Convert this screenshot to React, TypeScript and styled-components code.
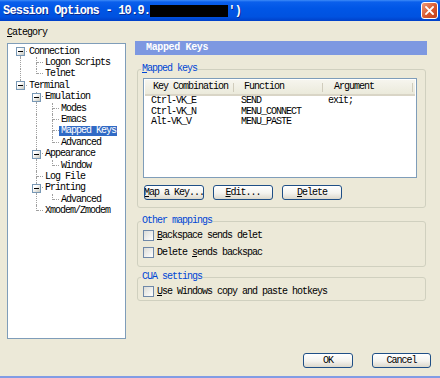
import React from 'react';
import styled, { createGlobalStyle } from 'styled-components';

const mono = `"Liberation Mono", "DejaVu Sans Mono", monospace`;

const GlobalStyle = createGlobalStyle`
  html, body {
    margin: 0;
    padding: 0;
    background: #ece9d8;
  }
  body {
    width: 440px;
    height: 378px;
    overflow: hidden;
  }
`;

type TreeNode = {
  label: string;
  level: number;
  guides: boolean[];
  first?: boolean;
  last: boolean;
  expander?: boolean;
  selected?: boolean;
};

const tree: TreeNode[] = [
  { label: 'Connection', level: 0, guides: [], first: true, last: false, expander: true },
  { label: 'Logon Scripts', level: 1, guides: [true], last: false },
  { label: 'Telnet', level: 1, guides: [true], last: true },
  { label: 'Terminal', level: 0, guides: [], last: true, expander: true },
  { label: 'Emulation', level: 1, guides: [false], last: false, expander: true },
  { label: 'Modes', level: 2, guides: [false, true], last: false },
  { label: 'Emacs', level: 2, guides: [false, true], last: false },
  { label: 'Mapped Keys', level: 2, guides: [false, true], last: false, selected: true },
  { label: 'Advanced', level: 2, guides: [false, true], last: true },
  { label: 'Appearance', level: 1, guides: [false], last: false, expander: true },
  { label: 'Window', level: 2, guides: [false, true], last: true },
  { label: 'Log File', level: 1, guides: [false], last: false },
  { label: 'Printing', level: 1, guides: [false], last: false, expander: true },
  { label: 'Advanced', level: 2, guides: [false, true], last: true },
  { label: 'Xmodem/Zmodem', level: 1, guides: [false], last: true },
];

const mappings = [
  { key: 'Ctrl-VK_E', fn: 'SEND', arg: 'exit;' },
  { key: 'Ctrl-VK_N', fn: 'MENU_CONNECT', arg: '' },
  { key: 'Alt-VK_V', fn: 'MENU_PASTE', arg: '' },
];

const Window = styled.div`
  width: 440px;
  height: 378px;
  box-sizing: border-box;
  background: #ece9d8;
  border-bottom: 2px solid #819ce4;
  display: flex;
  flex-direction: column;
  font-family: ${mono};
  font-size: 10px;
  letter-spacing: -1px;
  color: #000;
`;

const TitleBar = styled.div`
  height: 21px;
  flex: none;
  display: flex;
  align-items: center;
  padding-left: 3px;
  background: linear-gradient(
    #3d8bf7 0,
    #0a5fec 2px,
    #0056e6 40%,
    #0052e0 80%,
    #0040c8 100%
  );
`;

const Title = styled.div`
  flex: 1;
  display: flex;
  align-items: center;
  color: #fff;
  font-weight: bold;
  font-size: 12px;
  letter-spacing: -0.8px;
  white-space: pre;
  text-shadow: 1px 1px #0b2a8f;
`;

const Redacted = styled.span`
  display: inline-block;
  width: 78px;
  height: 12px;
  background: #000;
`;

const CloseButton = styled.div`
  width: 17px;
  height: 17px;
  margin-right: 2px;
  box-sizing: border-box;
  border: 1px solid #fff;
  border-radius: 3px;
  background: linear-gradient(135deg, #ef9a7a, #d8582f 55%, #c0401c);
  display: flex;
  align-items: center;
  justify-content: center;
`;

const Main = styled.div`
  display: flex;
  gap: 9px;
  padding-left: 7px;
`;

const LeftCol = styled.div`
  width: 119px;
  padding-top: 7px;
  display: flex;
  flex-direction: column;
`;

const CategoryLabel = styled.div`
  line-height: 10px;
  height: 10px;
  margin-bottom: 5px;
`;

const U = styled.span`
  text-decoration: underline;
`;

const TreeBox = styled.div`
  height: 296px;
  box-sizing: border-box;
  background: #fff;
  border: 1px solid #7f9db9;
  padding: 2px 0 0 5px;
`;

const TreeRow = styled.div`
  display: flex;
  height: 11.4px;
`;

const Guide = styled.span<{ $on: boolean }>`
  flex: none;
  width: 16px;
  height: 100%;

  &::before {
    content: '';
    display: ${({ $on }) => ($on ? 'block' : 'none')};
    margin-left: 7px;
    width: 0;
    height: 100%;
    border-left: 1px dotted #a0a0a0;
  }
`;

const Connector = styled.span`
  position: relative;
  flex: none;
  width: 14px;
  height: 100%;
  display: grid;
  grid-template-columns: 8px 6px;
  grid-template-rows: 1fr 1fr;
`;

const Quarter = styled.span<{ $right?: boolean; $bottom?: boolean }>`
  box-sizing: border-box;
  border-right: ${({ $right }) => ($right ? '1px dotted #a0a0a0' : 'none')};
  border-bottom: ${({ $bottom }) => ($bottom ? '1px dotted #a0a0a0' : 'none')};
`;

const Expander = styled.span`
  position: absolute;
  left: 3px;
  top: calc(50% - 4.5px);
  width: 9px;
  height: 9px;
  box-sizing: border-box;
  border: 1px solid #7898b5;
  background: linear-gradient(135deg, #ffffff 30%, #c6c6bd);

  &::after {
    content: '';
    display: block;
    width: 5px;
    height: 1px;
    margin: 3px auto 0;
    background: #000;
  }
`;

const TreeLabel = styled.span<{ $selected?: boolean }>`
  align-self: center;
  padding: 0 1px 0 2px;
  line-height: 10px;
  white-space: nowrap;
  background: ${({ $selected }) => ($selected ? '#316ac5' : 'transparent')};
  color: ${({ $selected }) => ($selected ? '#fff' : '#000')};
`;

const RightCol = styled.div`
  width: 292px;
  padding-top: 20px;
  display: flex;
  flex-direction: column;
`;

const PageHeader = styled.div`
  height: 14px;
  background: #7d98e1;
  color: #fff;
  font-weight: bold;
  letter-spacing: -0.35px;
  line-height: 14px;
  padding-left: 11px;
`;

const Group = styled.fieldset<{ $top: number; $bottom: number }>`
  margin: ${({ $top }) => $top}px 1px 0 2px;
  padding: 0 8px ${({ $bottom }) => $bottom}px 5px;
  border: 1px solid #d0d0bf;
  border-radius: 3px;
  min-width: 0;
`;

const Legend = styled.legend`
  padding: 0 1px;
  margin-left: -2px;
  color: #0046d5;
  line-height: 10px;
  font-size: 10px;
`;

const ListView = styled.div`
  margin-top: 4px;
  height: 100px;
  box-sizing: border-box;
  border: 1px solid #7f9db9;
  background: #fff;
  padding: 1px;
`;

const ListHeader = styled.div`
  display: grid;
  grid-template-columns: 91px 89px 1fr;
  height: 16px;
  box-sizing: border-box;
  background: linear-gradient(#f6f5ee, #ebeadb);
  border-bottom: 2px solid #d9d5c6;
`;

const HeaderCell = styled.div<{ $pad: number }>`
  padding-left: ${({ $pad }) => $pad}px;
  line-height: 14px;
  background: linear-gradient(#d0ccbc, #d0ccbc) no-repeat right 2px top 3px / 1px 9px;
`;

const ListRow = styled.div`
  display: grid;
  grid-template-columns: 91px 89px 1fr;
  height: 10.5px;
  line-height: 10.5px;
`;

const Cell = styled.div<{ $pad: number }>`
  padding-left: ${({ $pad }) => $pad}px;
  white-space: nowrap;
`;

const ButtonRow = styled.div`
  display: flex;
  gap: 9px;
  margin: 7px 0 0 1px;
`;

const Button = styled.button<{ $w: number }>`
  width: ${({ $w }) => $w}px;
  height: 15px;
  padding: 0;
  box-sizing: border-box;
  border: 1px solid #1f4f86;
  border-radius: 3px;
  background: linear-gradient(#ffffff, #f4f3ee 55%, #dcd8cc);
  font-family: ${mono};
  font-size: 10px;
  letter-spacing: -1px;
  color: #000;
  display: flex;
  align-items: center;
  justify-content: center;
  overflow: hidden;
  white-space: nowrap;
`;

const CheckRow = styled.div<{ $gap: number }>`
  display: flex;
  align-items: center;
  gap: 3px;
  height: 12px;
  margin-top: ${({ $gap }) => $gap}px;
  white-space: nowrap;
`;

const CheckBox = styled.span`
  width: 11px;
  height: 11px;
  box-sizing: border-box;
  border: 1px solid #6f88a8;
  background: linear-gradient(135deg, #dcdcd7, #ffffff);
`;

const Footer = styled.div`
  display: flex;
  justify-content: flex-end;
  gap: 19px;
  padding-right: 9px;
  margin-top: 14px;
`;

const TreeItem: React.FC<{ node: TreeNode }> = ({ node }) => (
  <TreeRow>
    {node.guides.map((on, i) => (
      <Guide key={i} $on={on} />
    ))}
    <Connector>
      <Quarter $right={!node.first} />
      <Quarter $bottom />
      <Quarter $right={!node.last} />
      <Quarter />
      {node.expander && <Expander />}
    </Connector>
    <TreeLabel $selected={node.selected}>{node.label}</TreeLabel>
  </TreeRow>
);

const App: React.FC = () => {
  return (
    <>
      <GlobalStyle />
      <Window>
        <TitleBar>
          <Title>
            Session Options - 10.9.<Redacted />')
          </Title>
          <CloseButton>
            <svg width="9" height="9" viewBox="0 0 9 9">
              <path d="M1 1L8 8M8 1L1 8" stroke="#fff" strokeWidth="1.8" strokeLinecap="square" />
            </svg>
          </CloseButton>
        </TitleBar>

        <Main>
          <LeftCol>
            <CategoryLabel>
              <U>C</U>ategory
            </CategoryLabel>
            <TreeBox>
              {tree.map((node, i) => (
                <TreeItem key={i} node={node} />
              ))}
            </TreeBox>
          </LeftCol>

          <RightCol>
            <PageHeader>Mapped Keys</PageHeader>

            <Group $top={9} $bottom={7}>
              <Legend>
                <U>M</U>apped keys
              </Legend>
              <ListView>
                <ListHeader>
                  <HeaderCell $pad={8}>Key Combination</HeaderCell>
                  <HeaderCell $pad={8}>Function</HeaderCell>
                  <HeaderCell $pad={9}>Argument</HeaderCell>
                </ListHeader>
                {mappings.map((m) => (
                  <ListRow key={m.key}>
                    <Cell $pad={6}>{m.key}</Cell>
                    <Cell $pad={5}>{m.fn}</Cell>
                    <Cell $pad={3}>{m.arg}</Cell>
                  </ListRow>
                ))}
              </ListView>
              <ButtonRow>
                <Button $w={60}>
                  <U>M</U>ap a Key...
                </Button>
                <Button $w={60}>
                  <U>E</U>dit...
                </Button>
                <Button $w={60}>
                  <U>D</U>elete
                </Button>
              </ButtonRow>
            </Group>

            <Group $top={8} $bottom={8}>
              <Legend>Other mappings</Legend>
              <CheckRow $gap={3}>
                <CheckBox />
                <span>
                  <U>B</U>ackspace sends delet
                </span>
              </CheckRow>
              <CheckRow $gap={5}>
                <CheckBox />
                <span>
                  Delete <U>s</U>ends backspac
                </span>
              </CheckRow>
            </Group>

            <Group $top={5} $bottom={3}>
              <Legend>CUA settings</Legend>
              <CheckRow $gap={3}>
                <CheckBox />
                <span>
                  <U>U</U>se Windows copy and paste hotkeys
                </span>
              </CheckRow>
            </Group>
          </RightCol>
        </Main>

        <Footer>
          <Button $w={50}>OK</Button>
          <Button $w={59}>Cancel</Button>
        </Footer>
      </Window>
    </>
  );
};

export default App;
